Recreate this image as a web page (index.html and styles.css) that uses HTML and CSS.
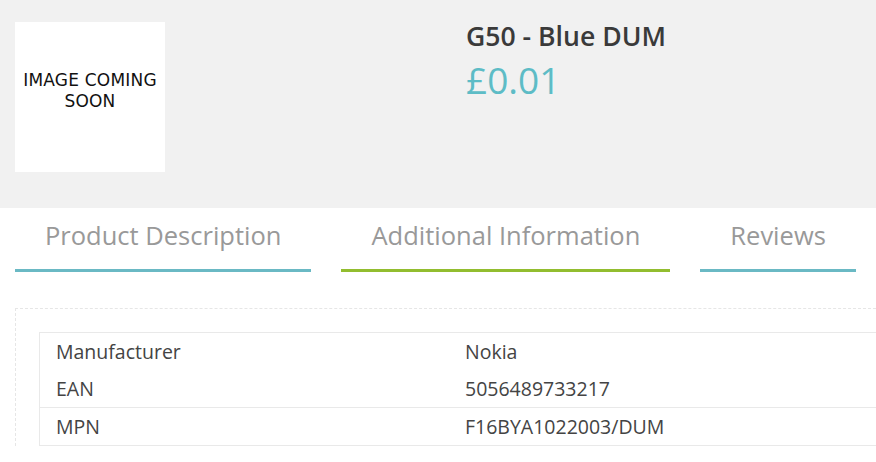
FILE: index.html
```html
<!DOCTYPE html>
<html>
<head>
<meta charset="utf-8">
<link rel="stylesheet" href="styles.css">
</head>
<body>
<div class="top">
  <div class="thumb">
    <div class="thumb-text">IMAGE COMING<br>SOON</div>
  </div>
  <div class="info">
    <h1 class="title">G50 - Blue DUM</h1>
    <div class="price">£0.01</div>
  </div>
</div>
<div class="tabs">
  <div class="tab tab-teal">Product Description</div>
  <div class="tab tab-green">Additional Information</div>
  <div class="tab tab-teal">Reviews</div>
</div>
<div class="panel">
  <table class="specs">
    <tr class="first"><td class="k">Manufacturer</td><td class="v">Nokia</td></tr>
    <tr class="nob"><td class="k">EAN</td><td class="v">5056489733217</td></tr>
    <tr><td class="k">MPN</td><td class="v">F16BYA1022003/DUM</td></tr>
  </table>
</div>
</body>
</html>
```
FILE: styles.css
```css
html, body { margin: 0; padding: 0; }
body {
  width: 876px;
  height: 462px;
  overflow: hidden;
  background: #fff;
  font-family: "Open Sans", "Liberation Sans", sans-serif;
}
.top {
  background: #f1f1f1;
  height: 208px;
  display: grid;
  grid-template-columns: 451px 1fr;
  padding-left: 15px;
  box-sizing: border-box;
}
.thumb {
  margin-top: 22px;
  width: 150px;
  height: 150px;
  background: #fff;
  display: flex;
  align-items: center;
  justify-content: center;
}
.thumb-text {
  font-family: "DejaVu Sans", sans-serif;
  font-size: 17px;
  line-height: 21px;
  letter-spacing: 0.2px;
  color: #111;
  text-align: center;
  margin-bottom: 13px;
}
.info { padding-top: 17px; }
.title {
  margin: 0;
  font-size: 26.6px;
  font-weight: 600;
  color: #3a3a3a;
  line-height: 38px;
}
.price {
  font-size: 37px;
  line-height: 50px;
  color: #5dbcc6;
  font-weight: 400;
}
.tabs {
  display: flex;
  gap: 30px;
  padding-left: 15px;
  padding-top: 9px;
}
.tab {
  padding: 0 30px;
  font-size: 25.5px;
  line-height: 36px;
  padding-bottom: 16px;
  color: #999;
  border-bottom: 3px solid #6ab9c4;
}
.tab-green { border-bottom-color: #92bd2f; }
.panel {
  margin: 36px 0 0 15px;
  border-top: 1px dashed #e6e6e6;
  border-left: 1px dashed #e6e6e6;
  padding: 23px 0 0 23px;
}
.specs {
  border-collapse: collapse;
  width: 840px;
  font-size: 19.5px;
  color: #444;
}
.specs td {
  border-top: 1px solid #e9e9e9;
  border-bottom: 1px solid #e9e9e9;
  height: 37px;
  padding: 0 16px;
  vertical-align: middle;
}
.specs tr.first td { border-bottom: none; }
.specs tr.nob td { border-top: none; }
.specs td.k { width: 377px; border-left: 1px solid #e9e9e9; }
```
